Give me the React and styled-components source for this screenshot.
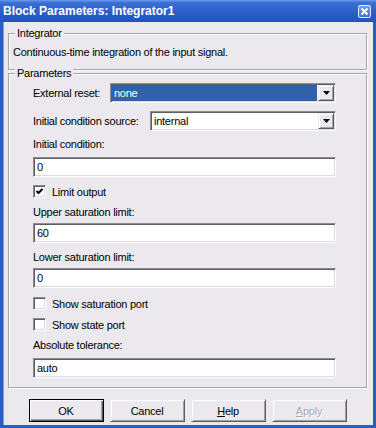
import styled, { createGlobalStyle } from "styled-components";

const GlobalStyle = createGlobalStyle`
  html, body {
    margin: 0;
    padding: 0;
    background: #ffffff;
  }
  body {
    font-family: "Liberation Sans", Arial, sans-serif;
    font-size: 11px;
    letter-spacing: -0.25px;
    color: #000;
  }
`;

const Window = styled.div`
  width: 376px;
  height: 428px;
  display: flex;
  flex-direction: column;
  box-sizing: border-box;
`;

const TitleBar = styled.div`
  height: 22px;
  flex: none;
  display: flex;
  align-items: center;
  justify-content: space-between;
  padding: 0 5px 1px 3px;
  box-sizing: border-box;
  background: linear-gradient(to bottom, #6d9bea 0%, #3a6fd6 12%, #2a5ec9 55%, #2352bd 100%);
`;

const Title = styled.span`
  color: #fff;
  font-weight: bold;
  font-size: 12px;
  letter-spacing: 0;
`;

const CloseButton = styled.div`
  width: 13px;
  height: 13px;
  box-sizing: border-box;
  border: 1px solid #e8eefc;
  border-radius: 2px;
  background: linear-gradient(to bottom, #6f9cf0, #3d72dc);
  display: flex;
  align-items: center;
  justify-content: center;
  margin-top: 1px;
`;

const Frame = styled.div`
  flex: 1;
  display: flex;
  border: 3px solid #2a5cc6;
  border-top: none;
  background: #ebe9ed;
`;

const Body = styled.div`
  flex: 1;
  display: flex;
  flex-direction: column;
  padding: 11px 6px 0 5px;
  box-shadow: inset 1px 0 0 #7f9fdc;
`;

const GroupBox = styled.div`
  position: relative;
  box-sizing: border-box;
  height: ${(p) => p.$height}px;
  margin-top: ${(p) => p.$top || 0}px;
  border: 1px solid #a6a5a9;
  box-shadow: 1px 1px 0 #ffffff, inset 1px 1px 0 #ffffff;
`;

const Legend = styled.span`
  position: absolute;
  top: -7px;
  left: 6px;
  padding: 0 2px;
  line-height: 13px;
  background: #ebe9ed;
`;

const Description = styled.div`
  height: 100%;
  display: flex;
  align-items: center;
  padding: 0 4px 1px;
`;

const Params = styled.div`
  display: flex;
  flex-direction: column;
  padding: 9px 30px 0 24px;
`;

const SelectRow = styled.div`
  display: flex;
  align-items: center;
  justify-content: space-between;
  height: 20px;
  margin-top: ${(p) => p.$top || 0}px;
`;

const Label = styled.div`
  height: 13px;
  line-height: 13px;
  margin-top: ${(p) => p.$top || 0}px;
`;

const sunken = `
  box-sizing: border-box;
  border: 1px solid;
  border-color: #8e8c91 #ffffff #ffffff #8e8c91;
  box-shadow: inset 1px 1px 0 #5e5d61, inset -1px -1px 0 #dcdadf;
  background: #ffffff;
`;

const SelectBox = styled.div`
  ${sunken}
  width: ${(p) => p.$width}px;
  height: 20px;
  display: flex;
  padding: 1px;
`;

const SelectValue = styled.div`
  flex: 1;
  margin-right: 1px;
  padding-left: 2px;
  line-height: 16px;
  background: ${(p) => (p.$selected ? "#3161a8" : "transparent")};
  color: ${(p) => (p.$selected ? "#ffffff" : "#000")};
`;

const DropButton = styled.div`
  width: 16px;
  height: 16px;
  box-sizing: border-box;
  border: 1px solid;
  border-color: #ebe9ed #5e5d61 #5e5d61 #ebe9ed;
  box-shadow: inset 1px 1px 0 #ffffff, inset -1px -1px 0 #a09fa3;
  background: #ebe9ed;
  display: flex;
  align-items: center;
  justify-content: center;
`;

const TextInput = styled.div`
  ${sunken}
  height: 20px;
  padding-left: 3px;
  line-height: 18px;
  margin-top: ${(p) => p.$top || 0}px;
`;

const CheckRow = styled.div`
  display: flex;
  align-items: center;
  gap: 6px;
  height: 13px;
  margin-top: ${(p) => p.$top || 0}px;
`;

const CheckBox = styled.div`
  ${sunken}
  width: 13px;
  height: 13px;
  display: flex;
  align-items: center;
  justify-content: center;
`;

const ButtonRow = styled.div`
  display: flex;
  justify-content: center;
  gap: 6px;
  margin-top: 11px;
`;

const Button = styled.div`
  width: 75px;
  height: 23px;
  box-sizing: border-box;
  display: flex;
  align-items: center;
  justify-content: center;
  background: #ebe9ed;
  border: 1px solid;
  border-color: ${(p) => (p.$default ? "#000 #000 #000 #000" : "#ebe9ed #5e5d61 #5e5d61 #ebe9ed")};
  box-shadow: ${(p) =>
    p.$default
      ? "inset 1px 1px 0 #ffffff, inset -1px -1px 0 #5e5d61, inset -2px -2px 0 #a09fa3"
      : "inset 1px 1px 0 #ffffff, inset -1px -1px 0 #a09fa3"};
  color: ${(p) => (p.$disabled ? "#aba9ae" : "#000")};
  text-shadow: ${(p) => (p.$disabled ? "1px 1px 0 #ffffff" : "none")};
`;

const Key = styled.span`
  text-decoration: underline;
`;

function Select({ width, value, selected }) {
  return (
    <SelectBox $width={width}>
      <SelectValue $selected={selected}>{value}</SelectValue>
      <DropButton>
        <svg width="7" height="4" viewBox="0 0 7 4">
          <path d="M0 0h7L3.5 4z" fill="#000" />
        </svg>
      </DropButton>
    </SelectBox>
  );
}

function Check({ checked, label, top }) {
  return (
    <CheckRow $top={top}>
      <CheckBox>
        {checked && (
          <svg width="9" height="9" viewBox="0 0 9 9">
            <path d="M1.5 4 L3.5 6 L7.5 2" stroke="#000" strokeWidth="2" fill="none" />
          </svg>
        )}
      </CheckBox>
      <span>{label}</span>
    </CheckRow>
  );
}

export default function App() {
  return (
    <Window>
      <GlobalStyle />
      <TitleBar>
        <Title>Block Parameters: Integrator1</Title>
        <CloseButton>
          <svg width="9" height="9" viewBox="0 0 9 9">
            <path d="M1.5 1.5 L7.5 7.5 M7.5 1.5 L1.5 7.5" stroke="#fff" strokeWidth="2" />
          </svg>
        </CloseButton>
      </TitleBar>
      <Frame>
        <Body>
          <GroupBox $height={37}>
            <Legend>Integrator</Legend>
            <Description>Continuous-time integration of the input signal.</Description>
          </GroupBox>
          <GroupBox $height={315} $top={3}>
            <Legend>Parameters</Legend>
            <Params>
              <SelectRow>
                <span>External reset:</span>
                <Select width={226} value="none" selected />
              </SelectRow>
              <SelectRow $top={8}>
                <span>Initial condition source:</span>
                <Select width={186} value="internal" />
              </SelectRow>
              <Label $top={7}>Initial condition:</Label>
              <TextInput $top={6}>0</TextInput>
              <Check checked label="Limit output" top={8} />
              <Label $top={8}>Upper saturation limit:</Label>
              <TextInput $top={4}>60</TextInput>
              <Label $top={8}>Lower saturation limit:</Label>
              <TextInput $top={4}>0</TextInput>
              <Check label="Show saturation port" top={9} />
              <Check label="Show state port" top={8} />
              <Label $top={8}>Absolute tolerance:</Label>
              <TextInput $top={6}>auto</TextInput>
            </Params>
          </GroupBox>
          <ButtonRow>
            <Button $default>OK</Button>
            <Button>Cancel</Button>
            <Button>
              <Key>H</Key>elp
            </Button>
            <Button $disabled>
              <Key>A</Key>pply
            </Button>
          </ButtonRow>
        </Body>
      </Frame>
    </Window>
  );
}
